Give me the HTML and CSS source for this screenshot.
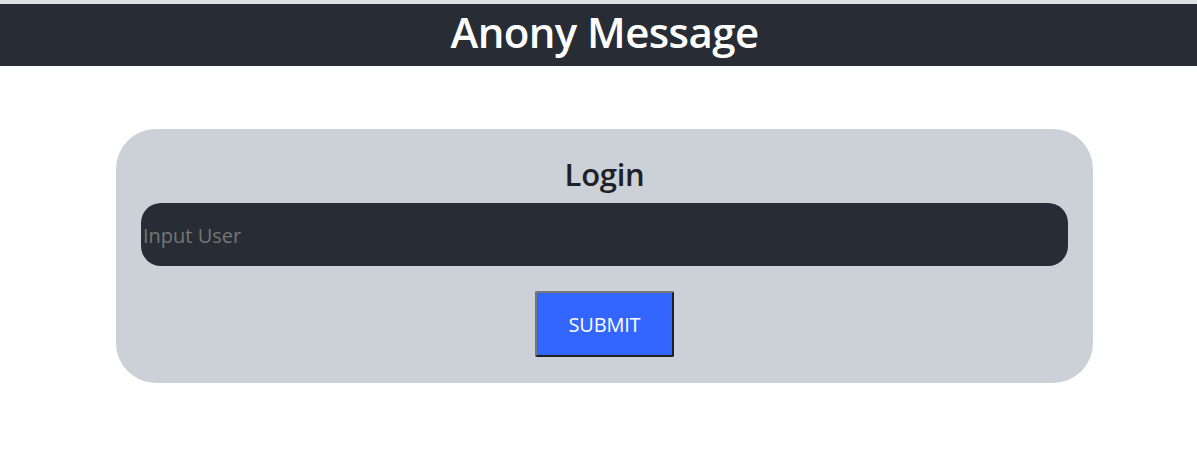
FILE: index.html
```html
<!DOCTYPE html>
<html>
<head>
<meta charset="utf-8">
<link rel="stylesheet" href="styles.css">
</head>
<body>
<div class="topline"></div>
<header class="header"><h1 class="title">Anony Message</h1></header>
<main class="main">
  <form class="card">
    <h2 class="card-title">Login</h2>
    <input class="user-input" type="text" placeholder="Input User">
    <button class="submit" type="button">SUBMIT</button>
  </form>
</main>
</body>
</html>
```
FILE: styles.css
```css
html, body {
  margin: 0;
  padding: 0;
  background: #ffffff;
  font-family: "Open Sans", "Noto Sans", sans-serif;
}
.topline {
  height: 4px;
  background: #dfe0e2;
}
.header {
  height: 62px;
  box-sizing: border-box;
  background: #282c34;
  display: flex;
  align-items: center;
  justify-content: center;
  padding-left: 12px;
  padding-bottom: 7px;
}
.title {
  margin: 0;
  color: #ffffff;
  font-size: 42px;
  font-weight: 600;
  letter-spacing: -0.6px;
  line-height: 1;
}
.main {
  padding: 63px 104px 0 116px;
}
.card {
  background: #ccd0d7;
  border-radius: 40px;
  height: 254px;
  box-sizing: border-box;
  padding: 26px 25px 0 25px;
  display: flex;
  flex-direction: column;
  align-items: center;
}
.card-title {
  margin: 0;
  height: 48px;
  font-size: 31px;
  font-weight: 600;
  color: #1e2127;
  line-height: 38px;
  letter-spacing: -0.3px;
}
.user-input {
  width: 100%;
  height: 63px;
  box-sizing: border-box;
  border: none;
  border-radius: 20px;
  background: #282c34;
  padding: 2px 2px 0 2px;
  font-family: inherit;
  font-size: 20px;
  color: #ffffff;
  outline: none;
}
.user-input::placeholder {
  color: #767676;
}
.submit {
  margin-top: 25px;
  width: 139px;
  height: 66px;
  box-sizing: border-box;
  background: #3366ff;
  color: #ffffff;
  font-family: inherit;
  font-size: 20px;
  border: 2px solid;
  border-color: #767676 #202020 #202020 #767676;
  border-radius: 2px;
  letter-spacing: -0.2px;
}
```
